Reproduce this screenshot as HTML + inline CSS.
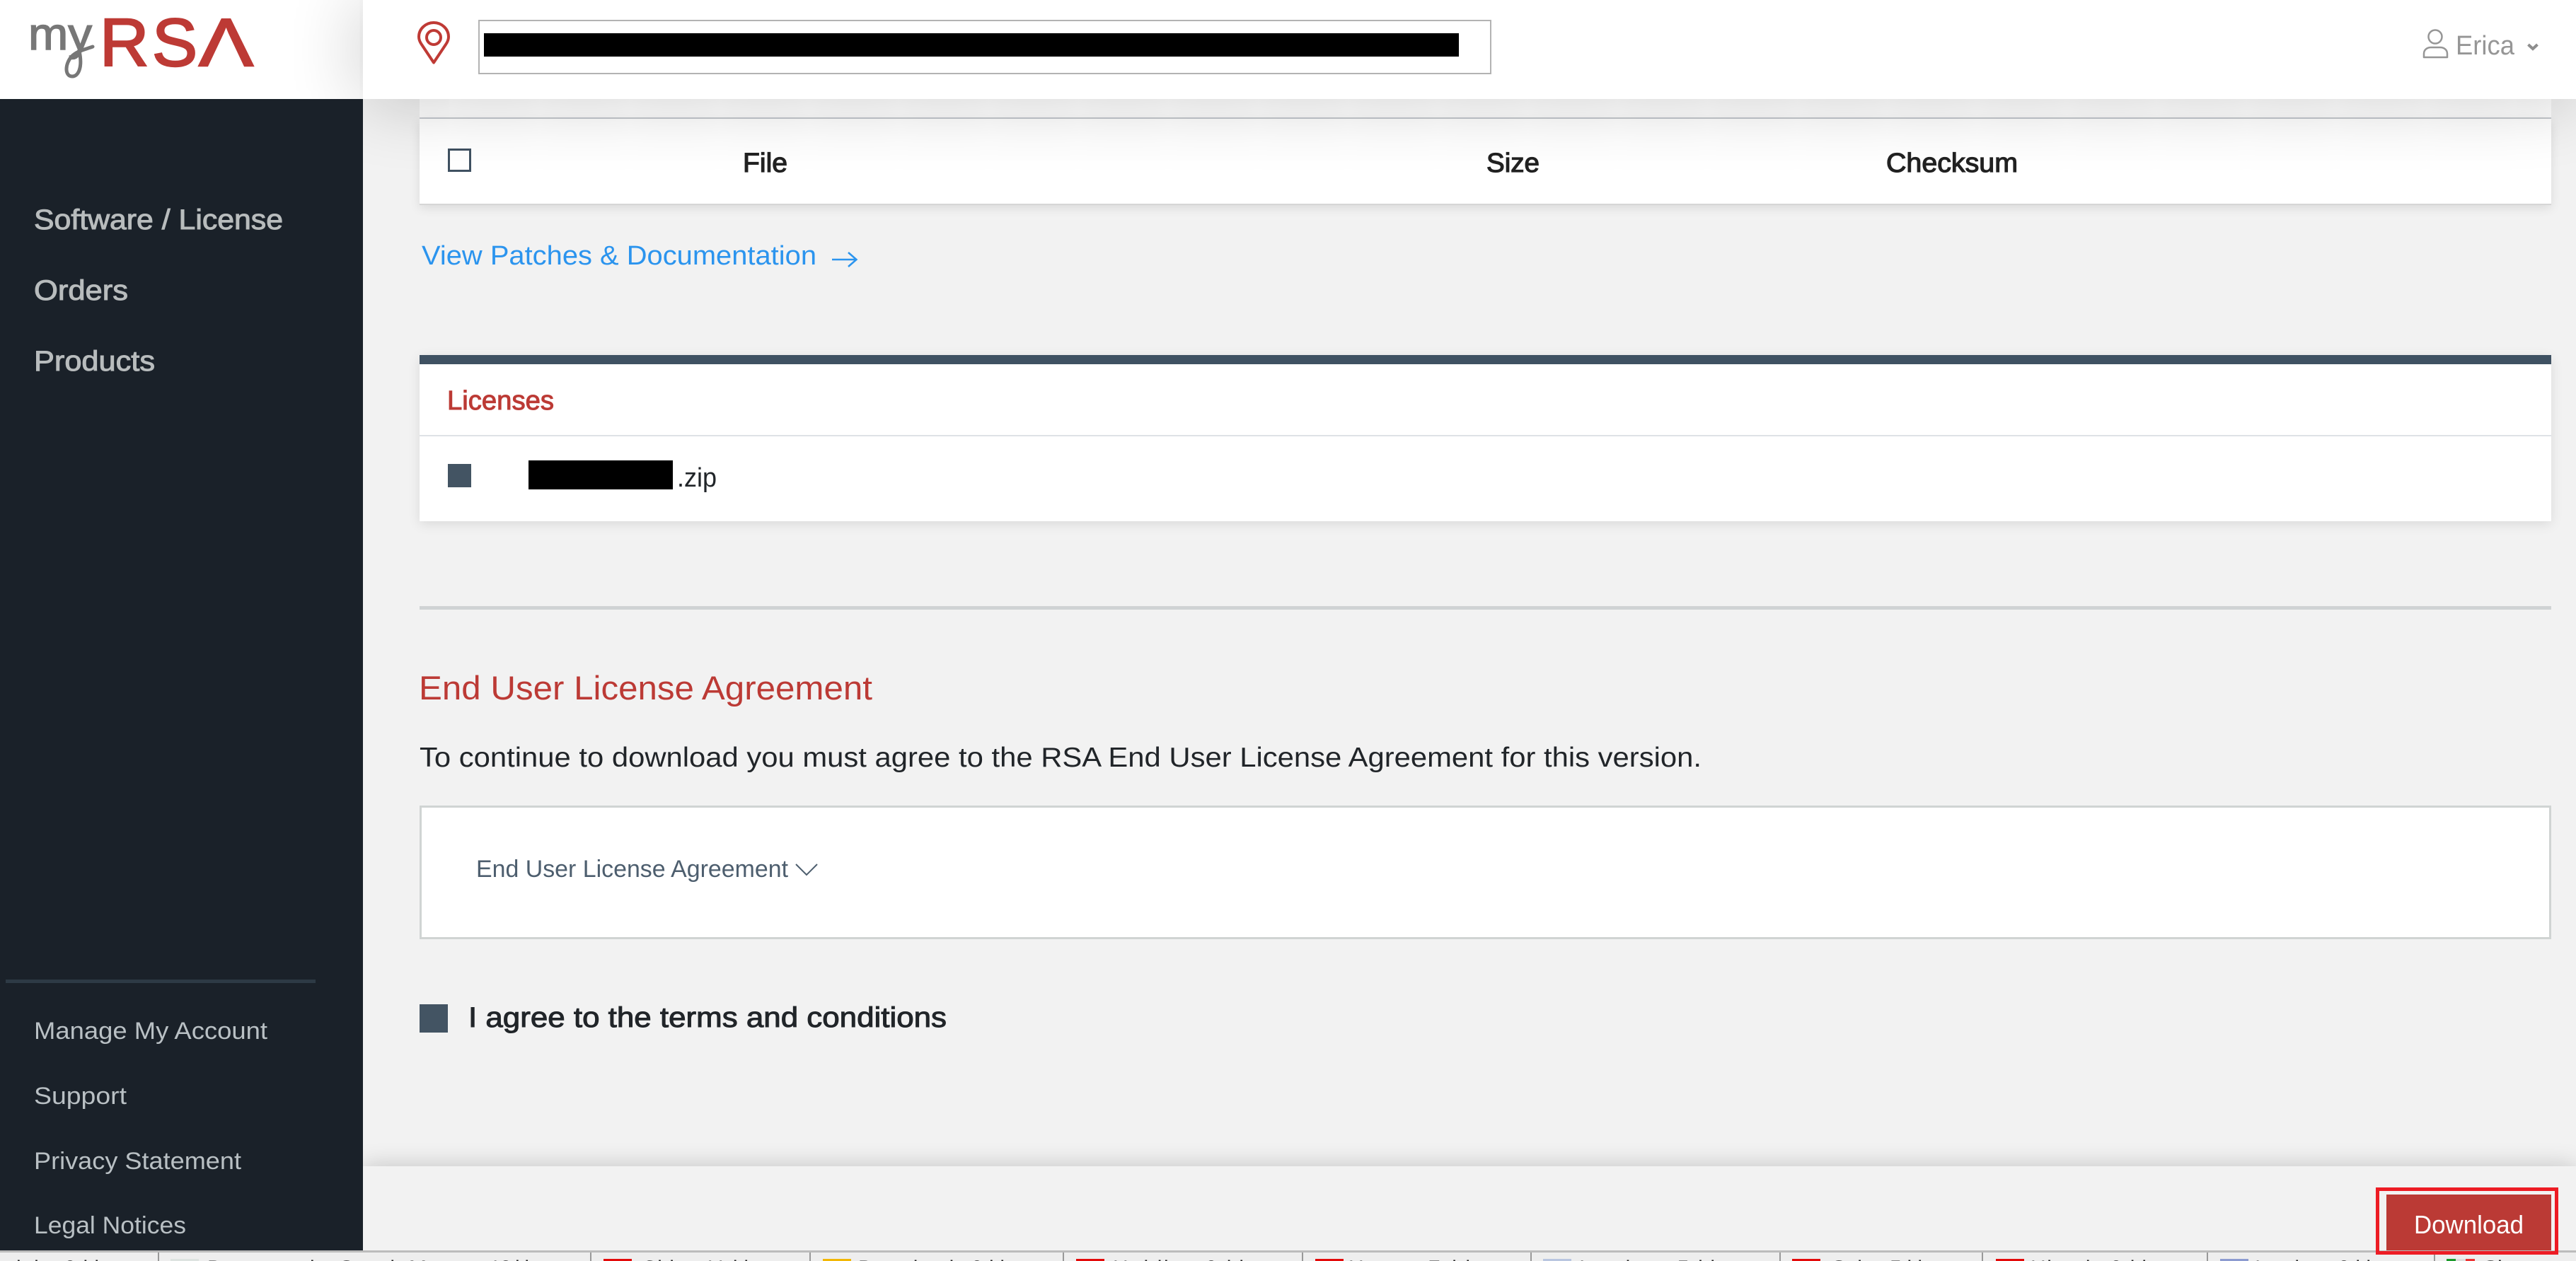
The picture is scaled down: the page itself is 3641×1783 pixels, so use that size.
<!DOCTYPE html>
<html lang="en">
<head>
<meta charset="utf-8">
<title>myRSA - Licenses</title>
<style>
html,body{margin:0;padding:0;width:3641px;height:1783px;overflow:hidden;background:#f2f2f2;}
body{position:relative;font-family:"Liberation Sans",sans-serif;}
.a{position:absolute;}
svg.t{position:absolute;left:0;top:0;z-index:20;}
svg.t text{font-family:"Liberation Sans",sans-serif;}
</style>
</head>
<body>
<!-- top card -->
<div class="a" style="left:593px;top:100px;width:3013px;height:66px;background:#fff;"></div>
<div class="a" style="left:593px;top:166px;width:3013px;height:2px;background:#c9cdd2;"></div>
<div class="a" style="left:593px;top:168px;width:3013px;height:120px;background:#fff;border-bottom:2px solid #d6d6d6;box-shadow:0 4px 14px rgba(0,0,0,.1);"></div>
<div class="a" style="left:633px;top:210px;width:27px;height:27px;border:3px solid #3f5161;background:#fff;"></div>

<!-- licenses card -->
<div class="a" style="left:593px;top:502px;width:3013px;height:235px;background:#fff;box-shadow:0 4px 16px rgba(0,0,0,.1);"></div>
<div class="a" style="left:593px;top:502px;width:3013px;height:13px;background:#3f5162;"></div>
<div class="a" style="left:593px;top:615px;width:3013px;height:2px;background:#dee2e6;"></div>
<div class="a" style="left:633px;top:656px;width:33px;height:33px;background:#435463;"></div>
<div class="a" style="left:747px;top:651px;width:204px;height:41px;background:#000;"></div>

<!-- hr -->
<div class="a" style="left:593px;top:857px;width:3013px;height:5px;background:#d0d3d4;"></div>

<!-- eula box -->
<div class="a" style="left:593px;top:1139px;width:3007px;height:183px;background:#fff;border:3px solid #d0d4d3;"></div>

<!-- terms checkbox -->
<div class="a" style="left:593px;top:1420px;width:40px;height:40px;background:#435463;"></div>

<!-- footer -->
<div class="a" style="left:513px;top:1649px;width:3128px;height:119px;background:#f2f2f2;box-shadow:0 0 32px rgba(0,0,0,.2);z-index:3;"></div>
<div class="a" style="left:3373px;top:1689px;width:233px;height:79px;background:#bb3a35;z-index:4;"></div>

<!-- logo block -->
<div class="a" style="left:0;top:0;width:513px;height:140px;background:#fff;z-index:4;"></div>
<!-- header -->
<div class="a" style="left:513px;top:0;width:3128px;height:140px;background:#fff;box-shadow:0 0 100px rgba(0,0,0,.24);z-index:5;"></div>
<div class="a" style="left:676px;top:28px;width:1428px;height:73px;border:2px solid #b3b3b3;background:#fff;z-index:6;"></div>
<div class="a" style="left:684px;top:47px;width:1378px;height:33px;background:#000;z-index:7;"></div>

<!-- sidebar -->
<div class="a" style="left:0;top:140px;width:513px;height:1628px;background:#1a2129;z-index:6;"></div>
<div class="a" style="left:8px;top:1385px;width:438px;height:5px;background:#2d3a45;z-index:7;"></div>

<!-- bottom bar -->
<div class="a" style="left:0;top:1768px;width:3641px;height:15px;background:#eee;z-index:8;"></div>
<div class="a" style="left:0;top:1768px;width:3641px;height:3px;background:#bcbcbc;z-index:9;"></div>
<div class="a" style="left:223px;top:1771px;width:2px;height:12px;background:#999;z-index:9;"></div>
<div class="a" style="left:834px;top:1771px;width:2px;height:12px;background:#999;z-index:9;"></div>
<div class="a" style="left:1144px;top:1771px;width:2px;height:12px;background:#999;z-index:9;"></div>
<div class="a" style="left:1502px;top:1771px;width:2px;height:12px;background:#999;z-index:9;"></div>
<div class="a" style="left:1840px;top:1771px;width:2px;height:12px;background:#999;z-index:9;"></div>
<div class="a" style="left:2163px;top:1771px;width:2px;height:12px;background:#999;z-index:9;"></div>
<div class="a" style="left:2515px;top:1771px;width:2px;height:12px;background:#999;z-index:9;"></div>
<div class="a" style="left:2801px;top:1771px;width:2px;height:12px;background:#999;z-index:9;"></div>
<div class="a" style="left:3119px;top:1771px;width:2px;height:12px;background:#999;z-index:9;"></div>
<div class="a" style="left:3440px;top:1771px;width:2px;height:12px;background:#999;z-index:9;"></div>
<div class="a" style="left:241px;top:1780px;width:40px;height:3px;background:#dde3e0;z-index:9;"></div>
<div class="a" style="left:853px;top:1780px;width:40px;height:3px;background:#e30a0a;z-index:9;"></div>
<div class="a" style="left:1163px;top:1780px;width:40px;height:3px;background:#f2b705;z-index:9;"></div>
<div class="a" style="left:1521px;top:1780px;width:40px;height:3px;background:#e30a0a;z-index:9;"></div>
<div class="a" style="left:1859px;top:1780px;width:40px;height:3px;background:#e30a0a;z-index:9;"></div>
<div class="a" style="left:2181px;top:1780px;width:40px;height:3px;background:#b9c6e0;z-index:9;"></div>
<div class="a" style="left:2533px;top:1780px;width:40px;height:3px;background:#e30a0a;z-index:9;"></div>
<div class="a" style="left:2821px;top:1780px;width:40px;height:3px;background:#e30a0a;z-index:9;"></div>
<div class="a" style="left:3138px;top:1780px;width:40px;height:3px;background:#8c9bd0;z-index:9;"></div>
<div class="a" style="left:3458px;top:1780px;width:13px;height:3px;background:#1a9a2a;z-index:9;"></div>
<div class="a" style="left:3471px;top:1780px;width:14px;height:3px;background:#ddd;z-index:9;"></div>
<div class="a" style="left:3485px;top:1780px;width:13px;height:3px;background:#e33;z-index:9;"></div>

<!-- red highlight around download -->
<div class="a" style="left:3358px;top:1679px;width:248px;height:85px;border:5px solid #ed1c24;z-index:12;"></div>

<svg class="t" width="3641" height="1783" viewBox="0 0 3641 1783" xmlns="http://www.w3.org/2000/svg">
  <!-- logo -->
  <g fill="#bd3a35" stroke="#bd3a35" stroke-width="2.5" font-size="96">
    <text x="141" y="93">R</text>
    <text x="215" y="93">S</text>
    <text x="281" y="93" textLength="77" lengthAdjust="spacingAndGlyphs">&#923;</text>
  </g>
  <text x="40" y="70" font-size="64" fill="#777" stroke="#777" stroke-width="1.5" textLength="90" lengthAdjust="spacingAndGlyphs">my</text>
  <path d="M112 72 C117 95 111 108 102 108 C92 108 91 92 101 80 C109 72 120 70 131 66" fill="none" stroke="#777" stroke-width="5" stroke-linecap="round"/>

  <!-- pin -->
  <g fill="none" stroke="#bf3a35" stroke-width="4">
    <path d="M613 88.5 L596 63 C592.5 58 592 55 592 52 C592 41 601.5 32 613 32 C624.5 32 634 41 634 52 C634 55 633.5 58 630 63 Z" stroke-linejoin="round"/>
    <circle cx="613" cy="53" r="10"/>
  </g>

  <!-- user -->
  <g fill="none" stroke="#969696" stroke-width="2.5">
    <circle cx="3442" cy="52" r="9.5"/>
    <path d="M3426 81 V76 C3426 70 3431 67 3436 67 H3449 C3454 67 3459 70 3459 76 V81 Z" stroke-linejoin="round"/>
  </g>
  <text x="3471" y="77" font-size="38" fill="#969696" textLength="83" lengthAdjust="spacingAndGlyphs">Erica</text>
  <path d="M3573.5 63 L3580 69 L3586.5 63" fill="none" stroke="#8e8e8e" stroke-width="4"/>

  <!-- sidebar nav -->
  <g fill="#b8bcbd" stroke="#b8bcbd" stroke-width="1" font-size="40">
    <text x="48" y="324" textLength="352" lengthAdjust="spacingAndGlyphs">Software / License</text>
    <text x="48" y="424" textLength="133" lengthAdjust="spacingAndGlyphs">Orders</text>
    <text x="48" y="524" textLength="171" lengthAdjust="spacingAndGlyphs">Products</text>
  </g>
  <g fill="#b9c0c4" font-size="34">
    <text x="48" y="1469" textLength="330" lengthAdjust="spacingAndGlyphs">Manage My Account</text>
    <text x="48" y="1561" textLength="131" lengthAdjust="spacingAndGlyphs">Support</text>
    <text x="48" y="1653" textLength="293" lengthAdjust="spacingAndGlyphs">Privacy Statement</text>
    <text x="48" y="1744" textLength="215" lengthAdjust="spacingAndGlyphs">Legal Notices</text>
  </g>

  <!-- table header -->
  <g fill="#212121" stroke="#212121" stroke-width="1.2" font-size="38">
    <text x="1050" y="243" textLength="63" lengthAdjust="spacingAndGlyphs">File</text>
    <text x="2101" y="243" textLength="75" lengthAdjust="spacingAndGlyphs">Size</text>
    <text x="2666" y="243" textLength="186" lengthAdjust="spacingAndGlyphs">Checksum</text>
  </g>

  <!-- view patches -->
  <text x="596" y="374" font-size="38" fill="#2b94ee" textLength="558" lengthAdjust="spacingAndGlyphs">View Patches &amp; Documentation</text>
  <path d="M1176 367 H1210 M1199 357 L1210.5 367 L1199 377" fill="none" stroke="#2b94ee" stroke-width="2.5"/>

  <!-- licenses -->
  <text x="632" y="579" font-size="38" fill="#bc3a35" stroke="#bc3a35" stroke-width="1" textLength="151" lengthAdjust="spacingAndGlyphs">Licenses</text>
  <text x="957" y="688" font-size="38" fill="#212529" textLength="56" lengthAdjust="spacingAndGlyphs">.zip</text>

  <!-- eula -->
  <text x="592" y="989" font-size="47" fill="#bc3a35" textLength="641" lengthAdjust="spacingAndGlyphs">End User License Agreement</text>
  <text x="593" y="1084" font-size="39" fill="#212529" textLength="1812" lengthAdjust="spacingAndGlyphs">To continue to download you must agree to the RSA End User License Agreement for this version.</text>
  <text x="673" y="1240" font-size="34" fill="#4d5e6e" textLength="441" lengthAdjust="spacingAndGlyphs">End User License Agreement</text>
  <path d="M1125 1222 L1140 1237 L1155 1222" fill="none" stroke="#4d5e6e" stroke-width="2"/>
  <text x="662" y="1452" font-size="40" fill="#212529" stroke="#212529" stroke-width="1" textLength="676" lengthAdjust="spacingAndGlyphs">I agree to the terms and conditions</text>

  <!-- download -->
  <text x="3412" y="1744" font-size="36" fill="#fff" textLength="155" lengthAdjust="spacingAndGlyphs">Download</text>

  <!-- bottom bar labels (only tops visible) -->
  <g fill="#222" font-size="30">
    <text x="23" y="1803" textLength="127" lengthAdjust="spacing">luke 0 kb</text>
    <text x="293" y="1803" textLength="465" lengthAdjust="spacing">Documentation Sample Manager 12 kb</text>
    <text x="907" y="1803" textLength="161" lengthAdjust="spacing">Chips 11 kb</text>
    <text x="1213" y="1803" textLength="217" lengthAdjust="spacing">Downloads 0 kb</text>
    <text x="1573" y="1803" textLength="195" lengthAdjust="spacing">Holding 0 kb</text>
    <text x="1906" y="1803" textLength="182" lengthAdjust="spacing">Hours 7 kb</text>
    <text x="2232" y="1803" textLength="202" lengthAdjust="spacing">Invoices 5 kb</text>
    <text x="2589" y="1803" textLength="138" lengthAdjust="spacing">Sales 5 kb</text>
    <text x="2870" y="1803" textLength="174" lengthAdjust="spacing">Hlands 0 kb</text>
    <text x="3187" y="1803" textLength="174" lengthAdjust="spacing">Invoices 0 kb</text>
    <text x="3510" y="1803">Sh</text>
  </g>
</svg>
</body>
</html>
